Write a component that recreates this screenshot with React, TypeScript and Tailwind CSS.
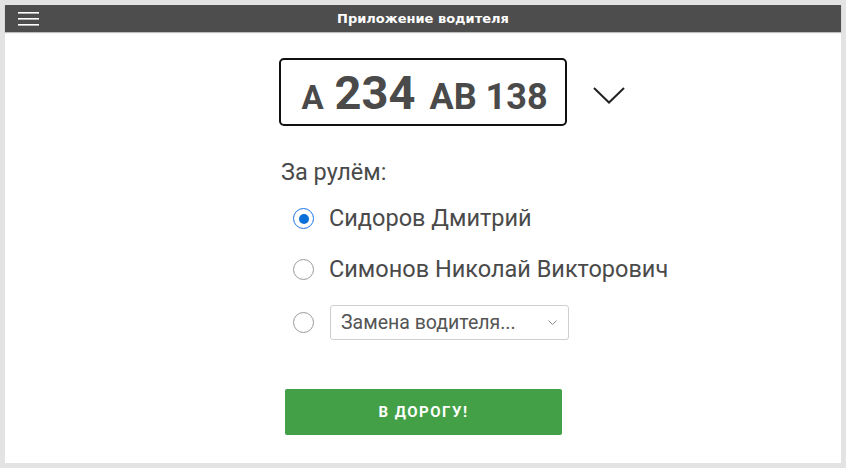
import { useState } from "react";

function Hamburger() {
  return (
    <svg width="22" height="14" viewBox="0 0 22 14" className="shrink-0">
      <rect x="0" y="0" width="21" height="1.6" fill="#fff" />
      <rect x="0" y="6" width="21" height="1.6" fill="#fff" />
      <rect x="0" y="12" width="21" height="1.6" fill="#fff" />
    </svg>
  );
}

function Radio({ checked, onClick }: { checked: boolean; onClick: () => void }) {
  return (
    <button
      onClick={onClick}
      className={
        "w-[21px] h-[21px] rounded-full flex items-center justify-center shrink-0 bg-white " +
        (checked ? "border border-[#1a73e8]" : "border border-[#9a9a9a]")
      }
    >
      {checked && <span className="w-[10px] h-[10px] rounded-full bg-[#0a6fd8]" />}
    </button>
  );
}

export default function App() {
  const [driver, setDriver] = useState(0);

  return (
    <div className="w-[846px] h-[468px] bg-[#e3e3e3] p-[5px] font-['Roboto',sans-serif]">
      <div className="w-full h-full bg-white flex flex-col">
        {/* шапка */}
        <div className="h-[27px] bg-[#4d4d4d] flex items-center px-[13px] shadow-[0_1px_1px_rgba(0,0,0,0.25)]">
          <Hamburger />
          <div className="flex-1 text-center text-white text-[13px] font-bold font-['DejaVu_Sans',sans-serif] pr-[22px]">
            Приложение водителя
          </div>
        </div>

        {/* номер машины */}
        <div className="grid grid-cols-[1fr_auto_1fr] items-center mt-[26px]">
          <div />
          <div className="w-[288px] h-[68px] border-2 border-[#111] rounded-[5px] flex items-baseline justify-center text-[#4a4a4a] font-bold pt-[9px] pl-[3px]">
            <span className="text-[33px] leading-none">А</span>
            <span className="text-[47px] leading-none ml-[11px]">234</span>
            <span className="text-[36px] leading-none ml-[14px]">АВ 138</span>
          </div>
          <div className="pl-[26px] pt-[6px]">
            <svg width="32" height="17" viewBox="0 0 32 17" fill="none">
              <path d="M1 1L16 15.5L31 1" stroke="#222" strokeWidth="2" />
            </svg>
          </div>
        </div>

        {/* водители */}
        <div className="w-[288px] mx-auto mt-[31px] text-[#4a4a4a]">
          <p className="text-[23.5px] leading-[31px] pl-[2px]">За рулём:</p>
          <div className="flex flex-col gap-[20px] pl-[14px] mt-[15px]">
            <label className="flex items-center gap-[15px] h-[31px]">
              <Radio checked={driver === 0} onClick={() => setDriver(0)} />
              <span className="text-[23.5px] whitespace-nowrap">Сидоров Дмитрий</span>
            </label>
            <label className="flex items-center gap-[15px] h-[31px]">
              <Radio checked={driver === 1} onClick={() => setDriver(1)} />
              <span className="text-[23.5px] whitespace-nowrap">Симонов Николай Викторович</span>
            </label>
            <div className="flex items-center gap-[16px] h-[35px]">
              <Radio checked={driver === 2} onClick={() => setDriver(2)} />
              <div className="flex-1 h-[35px] border border-[#cfcfcf] rounded-[3px] flex items-center pl-[10px] pr-[11px] text-[#555] mr-[-2px]">
                <span className="flex-1 text-[19.5px]">Замена водителя...</span>
                <svg width="9" height="6" viewBox="0 0 9 6" fill="none">
                  <path d="M0.5 0.5L4.5 4.5L8.5 0.5" stroke="#888" strokeWidth="1" />
                </svg>
              </div>
            </div>
          </div>

          <button className="mt-[49px] ml-[6px] w-[277px] h-[46px] bg-[#43a047] rounded-[2px] text-white text-[15px] font-bold tracking-[1.5px]">
            В ДОРОГУ!
          </button>
        </div>
      </div>
    </div>
  );
}
